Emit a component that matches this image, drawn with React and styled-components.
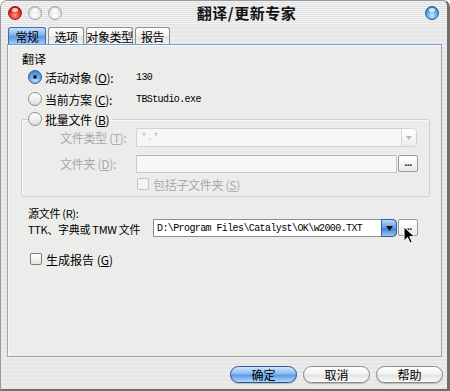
import React from 'react'
import styled, { createGlobalStyle } from 'styled-components'

const GlobalStyle = createGlobalStyle`
  html, body { margin: 0; padding: 0; background: #fff; }
  body {
    font-family: "Noto Sans CJK SC", "Liberation Sans", sans-serif;
    font-size: 12px;
    color: #000;
  }
  * { box-sizing: border-box; }
`

function App() {
    return (
        <>
            <GlobalStyle />
            <Window>
                <TitleBar>
                    <Lights>
                        <Light color="red" />
                        <Light />
                        <Light />
                    </Lights>
                    <Title>翻译/更新专家</Title>
                    <Light color="blue" />
                </TitleBar>

                <Tabs>
                    <Tab active width={38}>常规</Tab>
                    <Tab width={36}>选项</Tab>
                    <Tab width={47}>对象类型</Tab>
                    <Tab width={35}>报告</Tab>
                </Tabs>

                <Panel>
                    <Heading>翻译</Heading>
                    <RadioRow>
                        <Radio checked />
                        <RadioLabel>活动对象 (<u>O</u>):</RadioLabel>
                        <Value>130</Value>
                    </RadioRow>
                    <RadioRow>
                        <Radio />
                        <RadioLabel>当前方案 (<u>C</u>):</RadioLabel>
                        <Value>TBStudio.exe</Value>
                    </RadioRow>

                    <Group>
                        <Legend>
                            <Radio />
                            <span>批量文件 (<u>B</u>)</span>
                        </Legend>
                        <FieldRow>
                            <FieldLabel>文件类型 (<u>T</u>):</FieldLabel>
                            <Select>
                                <SelectText>*.*</SelectText>
                                <SelectArrow>
                                    <svg width="6" height="4" viewBox="0 0 6 4"><path d="M0 0h6L3 4z" fill="#b8b8b8" /></svg>
                                </SelectArrow>
                            </Select>
                        </FieldRow>
                        <FieldRow gap={7}>
                            <FieldLabel>文件夹 (<u>D</u>):</FieldLabel>
                            <TextInput />
                            <Browse>...</Browse>
                        </FieldRow>
                        <SubCheckRow>
                            <CheckBox disabled />
                            <span>包括子文件夹 (<u>S</u>)</span>
                        </SubCheckRow>
                    </Group>

                    <SourceRow>
                        <SourceLabel>
                            <div>源文件 (R):</div>
                            <div>TTK、字典或 TMW 文件</div>
                        </SourceLabel>
                        <Combo>
                            <ComboText>D:\Program Files\Catalyst\OK\w2000.TXT</ComboText>
                            <ComboArrow>
                                <svg width="7" height="5" viewBox="0 0 7 5"><path d="M0 0h7L3.5 5z" fill="#111" /></svg>
                            </ComboArrow>
                        </Combo>
                        <CursorWrap>
                            <Browse>...</Browse>
                            <Cursor width="12" height="18" viewBox="0 0 12 18">
                                <path d="M1 1v14l3.5-3.5 2.6 5.6 2.2-1-2.6-5.4h5z" fill="#000" stroke="#fff" strokeWidth="1" />
                            </Cursor>
                        </CursorWrap>
                    </SourceRow>

                    <CheckRow>
                        <CheckBox />
                        <span>生成报告 (<u>G</u>)</span>
                    </CheckRow>
                </Panel>

                <Footer>
                    <PillButton primary>确定</PillButton>
                    <PillButton>取消</PillButton>
                    <PillButton>帮助</PillButton>
                </Footer>
            </Window>
        </>
    )
}
export default App

const Window = styled.div`
    width: 450px;
    height: 391px;
    display: flex;
    flex-direction: column;
    border: 1px solid #9a9a9a;
    border-right: 3px solid #6f6f6f;
    border-bottom: 2px solid #6f6f6f;
    border-radius: 7px 7px 0 0;
    overflow: hidden;
    background: repeating-linear-gradient(to bottom, #ececec 0 2px, #e5e5e5 2px 4px);
`
const TitleBar = styled.div`
    height: 23px;
    display: flex;
    align-items: center;
    padding: 0 8px 0 7px;
    background: repeating-linear-gradient(to bottom, #f2f2f2 0 1px, #e2e2e2 1px 2px);
`
const Lights = styled.div`
    display: flex;
    gap: 6px;
`
const lightBg = {
    red: 'radial-gradient(circle at 50% 70%, #ff9a8a 0%, #e8382a 45%, #a5100a 100%)',
    blue: 'radial-gradient(circle at 50% 70%, #cdeaff 0%, #5aa6ec 50%, #1d5fb8 100%)',
    grey: 'radial-gradient(circle at 50% 70%, #ffffff 0%, #e6e6e6 55%, #b9b9b9 100%)',
}
const Light = styled.span`
    position: relative;
    width: 14px;
    height: 14px;
    border-radius: 50%;
    background: ${p => lightBg[p.color || 'grey']};
    border: 1px solid ${p => p.color === 'red' ? '#8c1a12' : p.color === 'blue' ? '#2a5c9c' : '#a0a0a0'};
    &::after {
        content: '';
        position: absolute;
        left: 3px;
        top: 1px;
        width: 6px;
        height: 4px;
        border-radius: 50%;
        background: rgba(255, 255, 255, .75);
    }
`
const Title = styled.div`
    flex: 1;
    text-align: center;
    padding-left: 6px;
    font-size: 15px;
    font-weight: 700;
    color: #111;
    letter-spacing: 0.5px;
`
const Tabs = styled.div`
    display: flex;
    gap: 2px;
    margin-top: 3px;
    padding-left: 7px;
    height: 17px;
`
const Tab = styled.div`
    width: ${p => p.width}px;
    height: 17px;
    display: flex;
    align-items: center;
    justify-content: center;
    font-size: 12px;
    letter-spacing: -0.4px;
    white-space: nowrap;
    border: 1px solid ${p => p.active ? '#3d6fb0' : '#8f8f8f'};
    border-bottom: none;
    border-radius: 3px 3px 0 0;
    background: ${p => p.active
        ? 'linear-gradient(to bottom, #c9e1fb 0%, #7fb2ec 45%, #5b98e2 55%, #a6cdf5 100%)'
        : 'linear-gradient(to bottom, #ffffff 0%, #f1f1f1 50%, #e2e2e2 55%, #f4f4f4 100%)'};
`
const Panel = styled.div`
    flex: 1;
    margin: 0 5px 0 6px;
    padding: 0 11px 0 13px;
    display: flex;
    flex-direction: column;
    background: #ecedeb;
    border: 1px solid #a4a4a4;
    border-top: 1px solid #6d9fdc;
    box-shadow: inset 1px 1px 0 #f8f8f8;
`
const Heading = styled.div`
    height: 14px;
    line-height: 14px;
    margin-top: 7px;
    padding-left: 1px;
`
const RadioRow = styled.div`
    height: 22px;
    display: flex;
    align-items: center;
    padding-left: 7px;
    &:first-of-type { margin-top: 3px; }
`
const Radio = styled.span`
    position: relative;
    flex: none;
    width: 14px;
    height: 14px;
    border-radius: 50%;
    margin-right: 3px;
    border: 1px solid ${p => p.checked ? '#2f5f9f' : '#8c8c8c'};
    background: ${p => p.checked
        ? 'radial-gradient(circle at 50% 75%, #bfe0ff 0%, #5d9ee6 55%, #2f6fc4 100%)'
        : 'linear-gradient(to bottom, #ffffff 0%, #f0f0f0 50%, #dcdcdc 100%)'};
    &::after {
        content: '';
        display: ${p => p.checked ? 'block' : 'none'};
        position: absolute;
        left: 4px;
        top: 4px;
        width: 4px;
        height: 4px;
        border-radius: 50%;
        background: #102a4c;
    }
`
const RadioLabel = styled.span`
    width: 91px;
    flex: none;
    letter-spacing: -0.3px;
`
const Value = styled.span`
    font-family: "Liberation Mono", "DejaVu Sans Mono", monospace;
    font-size: 10px;
    letter-spacing: -0.6px;
`
const Group = styled.fieldset`
    margin: 1px 0 0;
    padding: 0 0 5px 6px;
    border: 1px solid #cfcfcd;
    border-radius: 2px;
    box-shadow: inset 1px 1px 0 #f9f9f9;
    min-width: 0;
`
const Legend = styled.legend`
    display: flex;
    align-items: center;
    height: 16px;
    padding: 0 3px 0 0;
    letter-spacing: -0.3px;
`
const FieldRow = styled.div`
    display: flex;
    align-items: center;
    height: 19px;
    margin-top: ${p => p.gap || 1}px;
    color: #a9a9a9;
`
const FieldLabel = styled.span`
    width: 76px;
    margin-left: 32px;
    flex: none;
    letter-spacing: -0.3px;
`
const Select = styled.div`
    width: 281px;
    height: 19px;
    display: flex;
    align-items: center;
    border: 1px solid #d2d2d2;
    border-radius: 0 4px 4px 0;
    background: #f7f7f6;
`
const SelectText = styled.span`
    flex: 1;
    padding-left: 4px;
    font-family: "Liberation Mono", monospace;
    font-size: 10px;
    color: #c0c0c0;
`
const SelectArrow = styled.span`
    width: 15px;
    height: 17px;
    display: flex;
    align-items: center;
    justify-content: center;
    border-left: 1px solid #d6d6d6;
    border-radius: 0 4px 4px 0;
    background: linear-gradient(to bottom, #ffffff, #ececec);
`
const TextInput = styled.div`
    width: 261px;
    height: 18px;
    border: 1px solid #cbcbcb;
    border-top-color: #b5b5b5;
    background: #f6f6f5;
`
const Browse = styled.div`
    width: 20px;
    height: 17px;
    margin-left: 1px;
    display: flex;
    align-items: center;
    justify-content: center;
    padding-bottom: 4px;
    font-family: "Liberation Sans", sans-serif;
    font-size: 11px;
    font-weight: 700;
    letter-spacing: -0.5px;
    color: #222;
    border: 1px solid #9a9a9a;
    border-radius: 2px;
    background: linear-gradient(to bottom, #ffffff, #eaeaea);
`
const SubCheckRow = styled.div`
    display: flex;
    align-items: center;
    height: 14px;
    margin-top: 4px;
    padding-left: 109px;
    color: #a9a9a9;
    letter-spacing: -0.3px;
`
const CheckBox = styled.span`
    width: 12px;
    height: 12px;
    flex: none;
    margin-right: 4px;
    border-radius: 2px;
    border: 1px solid ${p => p.disabled ? '#c4c4c4' : '#7c7c7c'};
    background: ${p => p.disabled
        ? '#f4f4f4'
        : 'linear-gradient(to bottom, #ffffff, #e4e4e4)'};
`
const SourceRow = styled.div`
    display: flex;
    align-items: flex-end;
    margin-top: 8px;
    padding-left: 7px;
`
const SourceLabel = styled.div`
    width: 125px;
    flex: none;
    line-height: 16px;
    font-size: 11px;
    letter-spacing: -0.3px;
    white-space: nowrap;
`
const Combo = styled.div`
    width: 244px;
    height: 18px;
    display: flex;
    align-items: center;
    border: 1px solid #8e8e8e;
    border-radius: 0 4px 4px 0;
    background: #fff;
`
const ComboText = styled.span`
    flex: 1;
    padding-left: 3px;
    font-family: "Liberation Mono", "DejaVu Sans Mono", monospace;
    font-size: 10px;
    letter-spacing: -0.6px;
    white-space: nowrap;
    overflow: hidden;
`
const ComboArrow = styled.span`
    width: 16px;
    height: 18px;
    margin: -1px -1px -1px 0;
    display: flex;
    align-items: center;
    justify-content: center;
    border: 1px solid #2e5f9e;
    border-radius: 0 5px 5px 0;
    background: linear-gradient(to bottom, #b9dafb 0%, #5c9be4 50%, #3f80d6 55%, #9cc8f4 100%);
`
const CursorWrap = styled.div`
    position: relative;
    margin-bottom: 1px;
`
const Cursor = styled.svg`
    position: absolute;
    left: 6px;
    top: 7px;
`
const CheckRow = styled.div`
    display: flex;
    align-items: center;
    height: 14px;
    margin-top: 15px;
    padding-left: 9px;
`
const Footer = styled.div`
    height: 32px;
    flex: none;
    display: flex;
    justify-content: flex-end;
    gap: 6px;
    padding: 9px 4px 0 0;
`
const PillButton = styled.div`
    width: 67px;
    height: 17px;
    display: flex;
    align-items: center;
    justify-content: center;
    font-size: 12px;
    border-radius: 9px;
    border: 1px solid ${p => p.primary ? '#2c5590' : '#8a8a8a'};
    background: ${p => p.primary
        ? 'linear-gradient(to bottom, #d2e8fd 0%, #88bbef 45%, #5a9be5 55%, #b6dbfa 100%)'
        : 'linear-gradient(to bottom, #ffffff 0%, #f3f3f3 45%, #e3e3e3 55%, #fafafa 100%)'};
    box-shadow: 0 1px 1px rgba(0, 0, 0, .2);
`
